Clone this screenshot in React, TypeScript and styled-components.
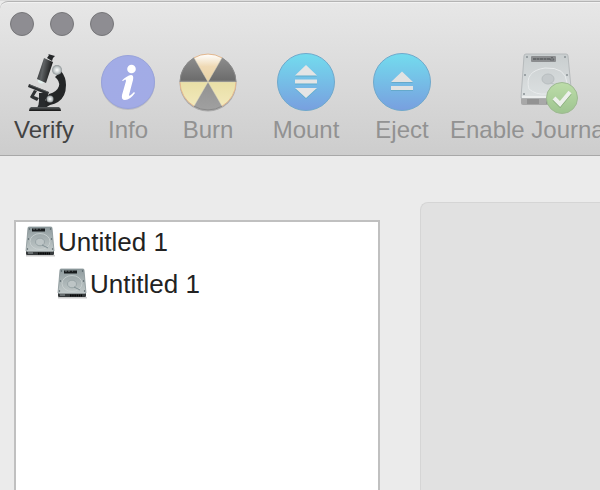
import React from "react";
import styled, { createGlobalStyle } from "styled-components";

const GlobalStyle = createGlobalStyle`
  * { box-sizing: border-box; }
  html, body { margin: 0; }
  body {
    background: #ebebeb;
    font-family: "Liberation Sans", Arial, sans-serif;
    overflow: hidden;
  }
`;

const Window = styled.div`
  display: flex;
  flex-direction: column;
  height: 100vh;
  background: #ebebeb;
  border-top: 1px solid #dcdcdc;
`;

const Header = styled.header`
  border-top: 1px solid #b4b4b4;
  border-bottom: 1px solid #a8a8a8;
  border-top-left-radius: 8px;
  background: linear-gradient(#e7e7e7, #cdcdcd);
  box-shadow: inset 0 1px 0 #f2f2f2;
  overflow: hidden;
`;

const TitleBar = styled.div`
  display: flex;
  gap: 16px;
  padding: 10px 10px 16px;
`;

const WindowButton = styled.button`
  width: 24px;
  height: 24px;
  padding: 0;
  border: 1px solid #767679;
  border-radius: 50%;
  background: #8e8d92;
`;

const Toolbar = styled.nav`
  display: grid;
  grid-template-columns: 88px 80px 80px 116px 76px 212px;
  padding-bottom: 11px;
`;

const ToolButton = styled.button`
  display: flex;
  flex-direction: column;
  align-items: center;
  gap: 4px;
  padding: 0;
  border: 0;
  background: none;
  color: #434343;
  font: 24px/28px "Liberation Sans", Arial, sans-serif;
  white-space: nowrap;

  &:disabled { color: #929292; }
`;

const ToolIcon = styled.svg`
  width: 64px;
  height: 60px;
  overflow: visible;
`;

const Content = styled.main`
  display: grid;
  grid-template-columns: 366px minmax(0, 1fr);
  gap: 40px;
  flex: 1;
  min-height: 0;
  padding-left: 14px;
`;

const VolumeList = styled.ul`
  display: flex;
  flex-direction: column;
  gap: 2px;
  margin: 64px 0 0;
  padding: 0;
  border: 2px solid #c0c0c0;
  border-bottom: 0;
  background: #fff;
  list-style: none;
`;

const Volume = styled.li<{ $level: number }>`
  display: flex;
  align-items: center;
  gap: 2px;
  height: 40px;
  padding-left: ${({ $level }) => 8 + $level * 32}px;
  color: #222;
  font-size: 26px;
  line-height: 30px;
`;

const VolumeIcon = styled.svg`
  width: 32px;
  height: 32px;
`;

const DetailPanel = styled.section`
  margin-top: 46px;
  border: 1px solid #d5d5d5;
  border-width: 1px 0 0 1px;
  border-top-left-radius: 8px;
  background: #e1e1e1;
`;

const Microscope = () => (
  <ToolIcon viewBox="0 0 64 60" aria-hidden="true">
    <defs>
      <linearGradient id="tube" x1="0" x2="1" y1="0" y2=".3">
        <stop offset="0" stopColor="#1c1d1e" />
        <stop offset=".45" stopColor="#606365" />
        <stop offset="1" stopColor="#151515" />
      </linearGradient>
      <linearGradient id="base" x1="0" x2="0" y1="0" y2="1">
        <stop offset="0" stopColor="#5b5f61" />
        <stop offset="1" stopColor="#151515" />
      </linearGradient>
      <radialGradient id="knob">
        <stop offset="0" stopColor="#fff" />
        <stop offset=".6" stopColor="#c6cccd" />
        <stop offset="1" stopColor="#8e9496" />
      </radialGradient>
    </defs>
    <path d="M49 19q5 6 5 14 0 12-8 17-3 2-8 3l-5 3v-7l4-7q8-2 10-8 1-5-4-9Z" fill="#242627" />
    <path d="m22 38 3 1-3 5 5 2-2 3-6-3-1-1Z" fill="#303335" />
    <path d="M27 41h9v5l-3 2 1 8h-9q2-3 2-7Z" fill="#282b2d" />
    <path d="m17 32 20 8-1 3-20-8Z" fill="#2c2f31" />
    <path d="m18 33 18 7" stroke="#686d6f" strokeWidth=".7" />
    <path d="m26 27 6 3q-2 3-6 0Z" fill="#e2f0ed" />
    <path d="m32 6 9 4-7 21-9-4Z" fill="url(#tube)" />
    <path d="m35 6 2-3-1-1 7 2-2 2-1 3Z" fill="#26282a" />
    <path d="M19 55h28q2 1 2 4H17q0-3 2-4Z" fill="url(#base)" />
    <circle cx="45" cy="18" r="5" fill="url(#knob)" />
    <circle cx="38" cy="47" r="3.5" fill="url(#knob)" />
  </ToolIcon>
);

const Info = () => (
  <ToolIcon viewBox="0 0 64 60" aria-hidden="true">
    <defs>
      <linearGradient id="info" x1="0" x2="0" y1="0" y2="1">
        <stop offset="0" stopColor="#a2ace6" />
        <stop offset="1" stopColor="#a2abe6" />
      </linearGradient>
    </defs>
    <circle cx="32" cy="31" r="27" fill="#bcbcc3" />
    <circle cx="32" cy="30" r="26.5" fill="url(#info)" stroke="#98a3da" />
    <circle cx="35.5" cy="17" r="4.3" fill="#fff" />
    <path d="M26 28.5q5-5 9-5.5 3 0 2 5l-4 15q0 2 3-1l2-2 1 1q-5 7-10 7-4 0-3-5l4-14q0-3-3 0Z" fill="#fff" />
  </ToolIcon>
);

const Burn = () => (
  <ToolIcon viewBox="0 0 64 60" aria-hidden="true">
    <defs>
      <linearGradient id="dark" x1="0" x2="0" y1="0" y2="1">
        <stop offset="0" stopColor="#929292" />
        <stop offset=".46" stopColor="#6d6d6d" />
        <stop offset=".52" stopColor="#929292" />
        <stop offset="1" stopColor="#a0a0a0" />
      </linearGradient>
      <linearGradient id="glow" x1="0" x2="0" y1="0" y2="1">
        <stop offset="0" stopColor="#fff" />
        <stop offset=".45" stopColor="#efd9b4" />
        <stop offset="1" stopColor="#e8d3a5" />
      </linearGradient>
      <linearGradient id="warm" x1="0" x2="0" y1="0" y2="1">
        <stop offset="0" stopColor="#e9dfa6" />
        <stop offset="1" stopColor="#f2e9bc" />
      </linearGradient>
    </defs>
    <circle cx="32" cy="31" r="28.5" fill="#aaa" />
    <circle cx="32" cy="30" r="28" fill="url(#dark)" />
    <path d="M32 30 18 5.8a28 28 0 0 1 28 0Z" fill="url(#glow)" />
    <path d="M32 30H4a28 28 0 0 0 14 24.2ZM32 30l14 24.2A28 28 0 0 0 60 30Z" fill="url(#warm)" />
    <path d="M18 5.8 46 54.2M46 5.8 18 54.2M4 30h56" stroke="#d5d0bf" strokeWidth=".5" />
    <path d="M4 30a28 28 0 0 1 14-24.2M46 5.8A28 28 0 0 1 60 30M18 54.2a28 28 0 0 0 28 0" fill="none" stroke="#898989" />
    <path d="M18 5.8a28 28 0 0 1 28 0M4 30a28 28 0 0 0 14 24.2M60 30a28 28 0 0 1-14 24.2" fill="none" stroke="#e4b88f" />
  </ToolIcon>
);

const BlueDisc = () => (
  <>
    <defs>
      <linearGradient id="blue" x1="0" x2="0" y1="0" y2="1">
        <stop offset="0" stopColor="#73dcee" />
        <stop offset="1" stopColor="#789fdf" />
      </linearGradient>
    </defs>
    <circle cx="32" cy="30" r="28.5" fill="url(#blue)" stroke="#70a9cc" />
  </>
);

const Mount = () => (
  <ToolIcon viewBox="0 0 64 60" aria-hidden="true">
    <BlueDisc />
    <path d="m32 14 11 10.5H21ZM21 28.5h22v4H21Zm0 8.5h22L32 47Z" fill="#5eaccc" />
    <path d="m32 13 11 10.5H21ZM21 27.5h22v4H21Zm0 8.5h22L32 46Z" fill="#e4e5e5" />
  </ToolIcon>
);

const Eject = () => (
  <ToolIcon viewBox="0 0 64 60" aria-hidden="true">
    <BlueDisc />
    <path d="m32 20.5 11 10.5H21ZM21 35h22v4H21Z" fill="#65a9cb" />
    <path d="m32 19.5 11 10.5H21ZM21 34h22v4H21Z" fill="#e1e2e2" />
  </ToolIcon>
);

const Journal = () => (
  <ToolIcon viewBox="0 0 64 60" aria-hidden="true">
    <defs>
      <linearGradient id="pale" x1="0" x2="0" y1="0" y2="1">
        <stop offset="0" stopColor="#c9cecf" />
        <stop offset="1" stopColor="#dce0e1" />
      </linearGradient>
      <linearGradient id="green" x1="0" x2="0" y1="0" y2="1">
        <stop offset="0" stopColor="#bddda9" />
        <stop offset="1" stopColor="#9ec490" />
      </linearGradient>
    </defs>
    <path d="M7 45h50v6q0 2-2 2H9q-2 0-2-2Z" fill="#a8a8a8" />
    <path d="M12 2h40q2 0 2 2l4 42H7l3-42q0-2 2-2Z" fill="url(#pale)" stroke="#b6babc" />
    <path d="M8 45h49" stroke="#eceeee" strokeWidth="2" />
    <rect x="17" y="4" width="25" height="6" rx="1" fill="#8b8d8f" />
    <path d="M19 7h17" stroke="#66696b" strokeWidth="2" strokeDasharray="3 .5" />
    <path d="m36 8 2-3 2 3Z" fill="none" stroke="#55585a" strokeWidth=".7" />
    <path d="M15 37q-5-18 16-21 21-1 22 15M15 37q7 6 17 5" fill="none" stroke="#e8ebec" strokeWidth="1" />
    <ellipse cx="34" cy="27" rx="6" ry="5" fill="#c4c9cb" stroke="#b8bec0" />
    <path d="M36 31q10 2 13 7" stroke="#bbc1c3" fill="none" />
    <g fill="#899094"><circle cx="13" cy="5" r="1" /><circle cx="51" cy="5" r="1" /><circle cx="11" cy="23" r="1" /><circle cx="53" cy="23" r="1" /><circle cx="10" cy="42" r="1" /></g>
    <path d="M13 47h12v5H13Zm19 0h6v5h-6Z" fill="#929292" />
    <circle cx="48" cy="46" r="15.5" fill="url(#green)" stroke="#9fba93" />
    <path d="m40 47 6 6 10-12" fill="none" stroke="#83a777" strokeWidth="4" />
    <path d="m40 46 6 6 10-12" fill="none" stroke="#edf0ec" strokeWidth="4" />
  </ToolIcon>
);

const Disk = () => (
  <VolumeIcon viewBox="0 0 32 32" aria-hidden="true">
    <defs>
      <linearGradient id="disk" x1="0" x2="0" y1="0" y2="1">
        <stop offset="0" stopColor="#8f9b9e" />
        <stop offset="1" stopColor="#c1c9c9" />
      </linearGradient>
    </defs>
    <path d="M2 29h29v1.5H2Z" fill="#ccc" />
    <path d="M2 25h28v3q0 1-1 1H3q-1 0-1-1Z" fill="#35393b" />
    <path d="M5 1h22q1 0 1 1l2 23H2L4 2q0-1 1-1Z" fill="url(#disk)" stroke="#7c898c" strokeWidth=".7" />
    <path d="M2.5 25h27" stroke="#dae0e0" />
    <path d="M8 2.5h13v3H8Z" fill="#171b1d" />
    <path d="M9 3h2m1 0h2m2 0h1" stroke="#737a7c" />
    <ellipse cx="16" cy="15.5" rx="10" ry="8" fill="none" stroke="#cad2d2" strokeWidth=".8" />
    <ellipse cx="16" cy="16" rx="4.5" ry="3.8" fill="#bdc5c6" stroke="#8d999c" strokeWidth=".7" />
    <path d="m18 19 6 3" stroke="#819094" />
    <g fill="#4b595e"><circle cx="5.5" cy="3" r=".7" /><circle cx="26.5" cy="3" r=".7" /><circle cx="4.5" cy="13" r=".7" /><circle cx="27.5" cy="13" r=".7" /><circle cx="3.5" cy="23" r=".7" /><circle cx="28.5" cy="23" r=".7" /></g>
    <path d="M14 27.5h12" stroke="#050505" strokeWidth="2" strokeDasharray="1.5 .7" />
    <path d="M4 27h5" stroke="#9ba3a5" />
  </VolumeIcon>
);

const tools = [
  { label: "Verify", icon: Microscope, enabled: true },
  { label: "Info", icon: Info, enabled: false },
  { label: "Burn", icon: Burn, enabled: false },
  { label: "Mount", icon: Mount, enabled: false },
  { label: "Eject", icon: Eject, enabled: false },
  { label: "Enable Journaling", icon: Journal, enabled: false },
];

const volumes = [
  { name: "Untitled 1", level: 0 },
  { name: "Untitled 1", level: 1 },
];

export default function App() {
  return (
    <>
      <GlobalStyle />
      <Window>
        <Header>
          <TitleBar>
            <WindowButton aria-label="Close" />
            <WindowButton aria-label="Minimize" />
            <WindowButton aria-label="Zoom" />
          </TitleBar>
          <Toolbar>
            {tools.map(({ label, icon: Icon, enabled }) => (
              <ToolButton key={label} disabled={!enabled}>
                <Icon />
                {label}
              </ToolButton>
            ))}
          </Toolbar>
        </Header>
        <Content>
          <VolumeList>
            {volumes.map(({ name, level }) => (
              <Volume key={level} $level={level}>
                <Disk />
                {name}
              </Volume>
            ))}
          </VolumeList>
          <DetailPanel />
        </Content>
      </Window>
    </>
  );
}
